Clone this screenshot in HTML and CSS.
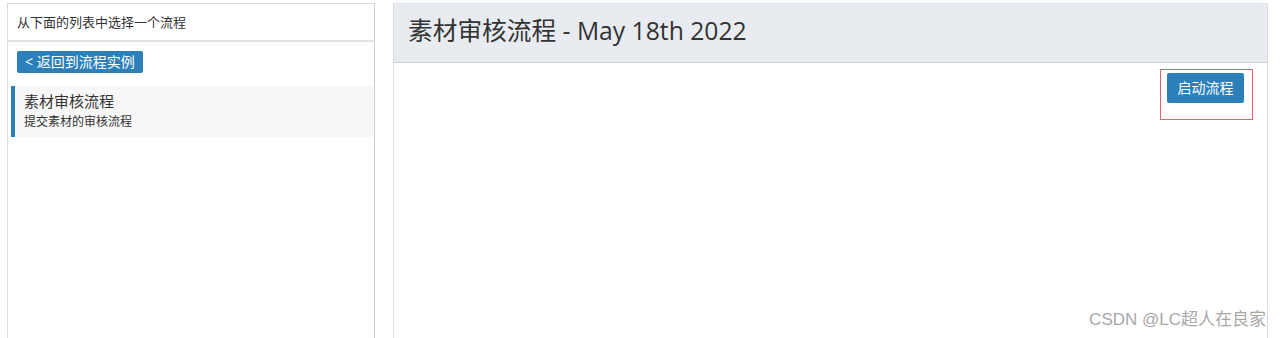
FILE: index.html
```html
<!DOCTYPE html>
<html lang="zh-CN">

<head>
    <meta charset="UTF-8">
    <title>流程</title>
    <link rel="stylesheet" href="styles.css">
</head>

<body>
    <div class="wrap">
        <div class="side">
            <div class="side-head">从下面的列表中选择一个流程</div>
            <div class="side-body">
                <a class="btn btn-back">&lt; 返回到流程实例</a>
                <ul class="list">
                    <li class="item">
                        <h4>素材审核流程</h4>
                        <p>提交素材的审核流程</p>
                    </li>
                </ul>
            </div>
        </div>
        <div class="main">
            <div class="main-head">
                <h2>素材审核流程 - May 18th 2022</h2>
            </div>
            <div class="main-body">
                <a class="btn btn-start">启动流程</a>
                <span class="mark"></span>
            </div>
        </div>
    </div>
    <div class="watermark">CSDN @LC超人在良家</div>
</body>

</html>
```

FILE: styles.css
```css
* {
    padding: 0;
    margin: 0;
    list-style: none;
    box-sizing: border-box;
}

html,
body {
    height: 338px;
    overflow: hidden;
}

body {
    background: #fff;
    color: #333;
    font-family: "Open Sans", "Noto Sans CJK SC", sans-serif;
    position: relative;
}

.wrap {
    display: flex;
    padding: 3px 0 0 7px;
}

.side {
    width: 368px;
    height: 335px;
    border: 1px solid #dcdcdc;
    border-bottom: none;
    border-right-color: #d0d0d0;
}

.side-head {
    height: 38px;
    line-height: 36px;
    padding-left: 9px;
    font-size: 13px;
    color: #333;
    border-bottom: 2px solid #e3e3e3;
}

.side-body {
    padding: 0 0 0 3px;
}

.btn {
    display: inline-block;
    color: #fff;
    background: #2b80b9;
    border-radius: 2px;
    text-align: center;
    cursor: pointer;
}

.btn-back {
    margin: 9px 0 0 6px;
    height: 22px;
    line-height: 22px;
    padding: 0 8px 0 8px;
    font-size: 14px;
}

.list {
    margin-top: 13px;
}

.item {
    background: #f7f7f7;
    border-left: 4px solid #2b80b9;
    height: 51px;
    padding: 5px 9px;
}

.item h4 {
    font-size: 15px;
    font-weight: normal;
    line-height: 21px;
    color: #333;
}

.item p {
    font-size: 12px;
    line-height: 20px;
    color: #333;
}

.main {
    margin-left: 18px;
    width: 875px;
    height: 335px;
    border: 1px solid #dcdcdc;
    border-bottom: none;
    border-top-color: #e0e4e8;
}

.main-head {
    height: 59px;
    background: #e8ecf1;
    border-bottom: 1px solid #c8d0d8;
    padding-left: 14px;
}

.main-head h2 {
    font-size: 24.7px;
    font-weight: normal;
    line-height: 54px;
    color: #333;
}

.main-body {
    position: relative;
    display: flex;
    justify-content: flex-end;
    padding: 10px 23px 0 0;
}

.btn-start {
    width: 77px;
    height: 30px;
    line-height: 30px;
    font-size: 14px;
}

.mark {
    position: absolute;
    top: 6px;
    right: 14px;
    width: 93px;
    height: 51px;
    border: 1px solid #e35d6a;
}

.watermark {
    position: absolute;
    right: 14px;
    bottom: 8px;
    font-family: "Liberation Sans", "Noto Sans CJK SC", sans-serif;
    font-size: 17px;
    color: #a8a8a8;
}
```
